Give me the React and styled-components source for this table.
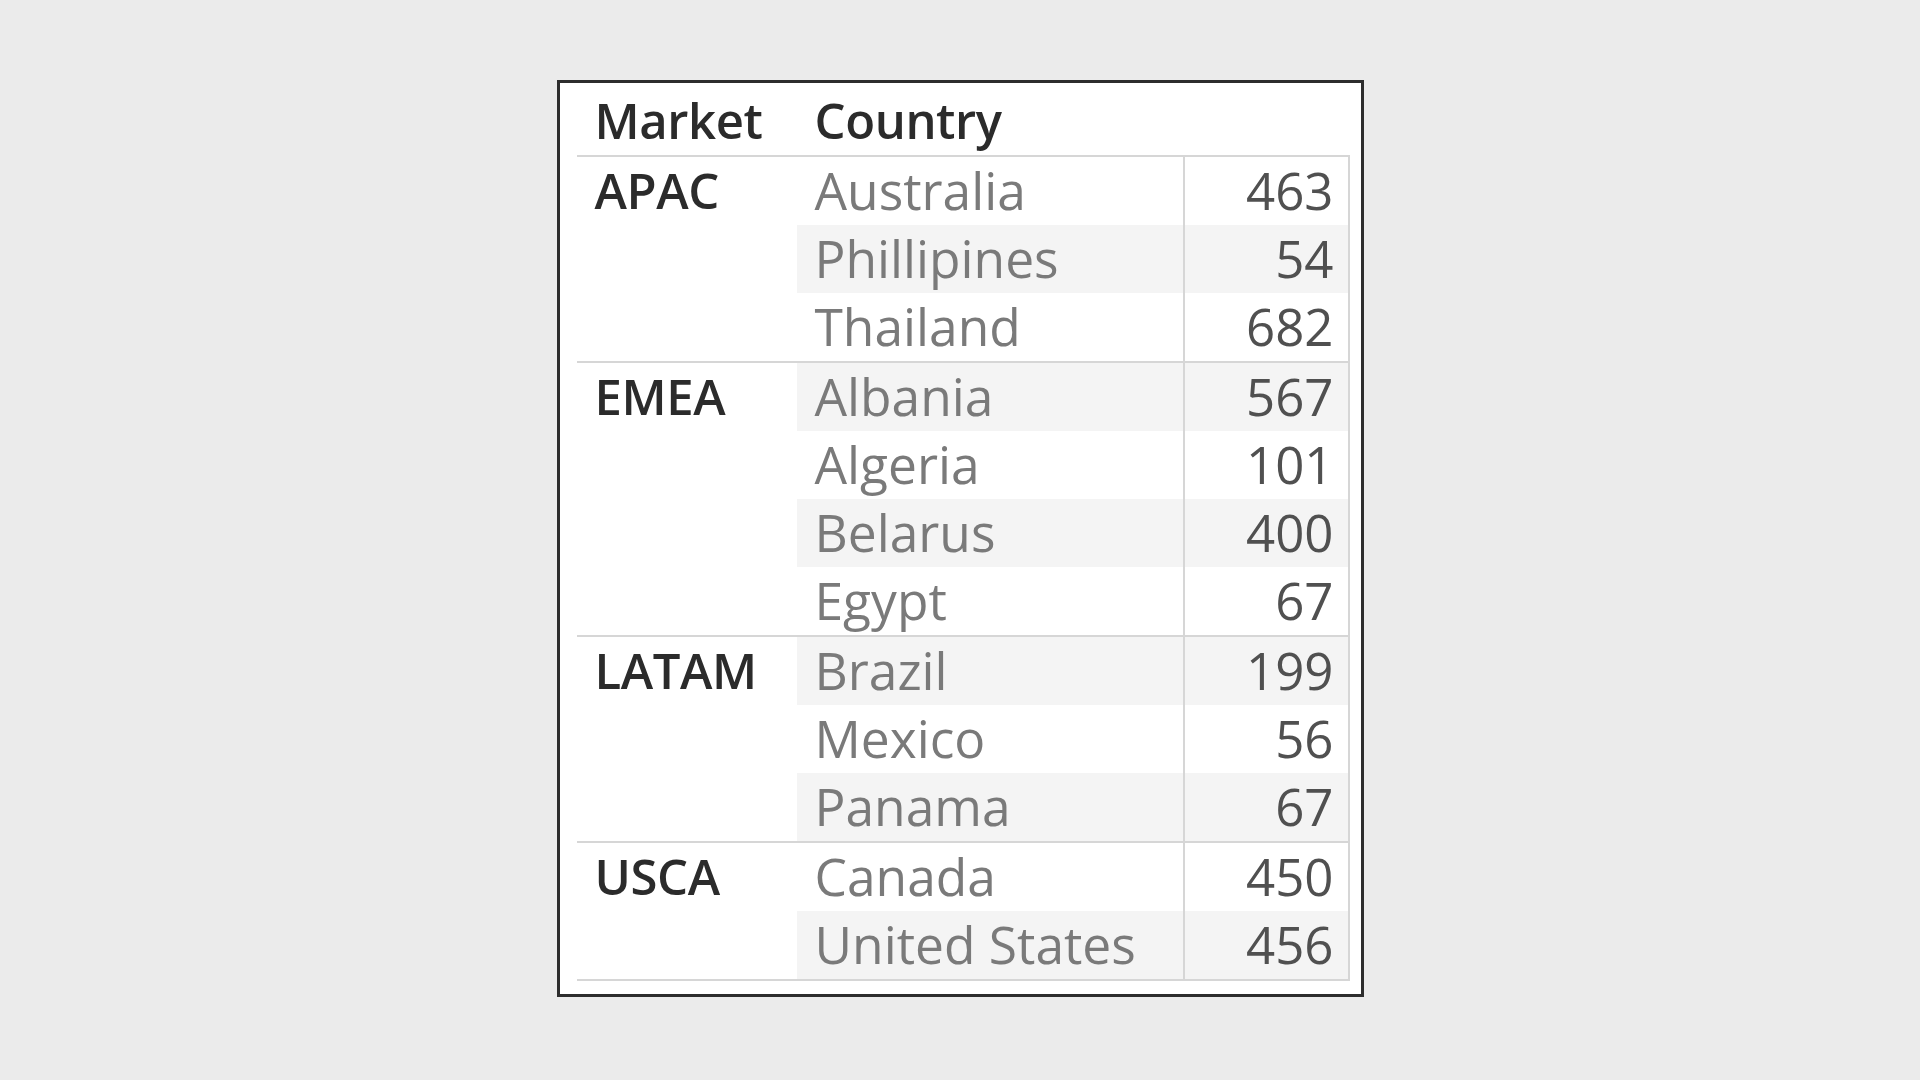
import React from "react";
import styled, { createGlobalStyle } from "styled-components";

const GlobalStyle = createGlobalStyle`
  html, body { margin: 0; padding: 0; }
  body {
    background: #ebebeb;
    font-family: "Open Sans", "Noto Sans", "Liberation Sans", sans-serif;
  }
`;

const Page = styled.div`
  width: 1920px;
  height: 1080px;
  box-sizing: border-box;
  padding-bottom: 3px;
  display: flex;
  align-items: center;
  justify-content: center;
`;

const Frame = styled.div`
  background: #ffffff;
  border: 3px solid #2d2d2d;
  padding: 0 11px 13px 17px;
`;

const Table = styled.div`
  display: flex;
  flex-direction: column;
  width: 773px;
  border-bottom: 2px solid #d6d6d6;
`;

const HeaderRow = styled.div`
  display: flex;
  height: 72px;
  padding-top: 3px;
  box-sizing: border-box;
`;

const HeaderCell = styled.div`
  width: ${(p) => p.$w}px;
  padding-left: 18px;
  box-sizing: border-box;
  font-size: 49px;
  letter-spacing: -0.4px;
  line-height: 68px;
  font-weight: 600;
  color: #2b2b2b;
  white-space: nowrap;
`;

const Group = styled.div`
  display: flex;
  border-top: 2px solid #d6d6d6;
`;

const MarketCell = styled.div`
  width: 220px;
  flex: none;
  padding-left: 18px;
  box-sizing: border-box;
  font-size: 49px;
  letter-spacing: -0.4px;
  line-height: 66px;
  font-weight: 600;
  color: #2b2b2b;
`;

const Rows = styled.div`
  display: flex;
  flex-direction: column;
`;

const Row = styled.div`
  display: flex;
  height: 68px;
  background: ${(p) => (p.$shaded ? "#f4f4f4" : "#ffffff")};
`;

const CountryCell = styled.div`
  width: 388px;
  box-sizing: border-box;
  padding-left: 18px;
  border-right: 2px solid #d6d6d6;
  font-size: 51.5px;
  line-height: 66px;
  color: #7a7a7a;
  white-space: nowrap;
`;

const ValueCell = styled.div`
  width: 165px;
  box-sizing: border-box;
  padding-right: 14px;
  border-right: 2px solid #d6d6d6;
  text-align: right;
  font-size: 51px;
  line-height: 66px;
  color: #505050;
`;

const data = [
  { market: "APAC", rows: [["Australia", 463], ["Phillipines", 54], ["Thailand", 682]] },
  { market: "EMEA", rows: [["Albania", 567], ["Algeria", 101], ["Belarus", 400], ["Egypt", 67]] },
  { market: "LATAM", rows: [["Brazil", 199], ["Mexico", 56], ["Panama", 67]] },
  { market: "USCA", rows: [["Canada", 450], ["United States", 456]] },
];

export default function App() {
  let idx = 0;
  return (
    <>
      <GlobalStyle />
      <Page>
        <Frame>
          <Table>
            <HeaderRow>
              <HeaderCell $w={220}>Market</HeaderCell>
              <HeaderCell $w={388}>Country</HeaderCell>
            </HeaderRow>
            {data.map((g) => (
              <Group key={g.market}>
                <MarketCell>{g.market}</MarketCell>
                <Rows>
                  {g.rows.map(([country, value]) => {
                    idx += 1;
                    return (
                      <Row key={country} $shaded={idx % 2 === 0}>
                        <CountryCell>{country}</CountryCell>
                        <ValueCell>{value}</ValueCell>
                      </Row>
                    );
                  })}
                </Rows>
              </Group>
            ))}
          </Table>
        </Frame>
      </Page>
    </>
  );
}
